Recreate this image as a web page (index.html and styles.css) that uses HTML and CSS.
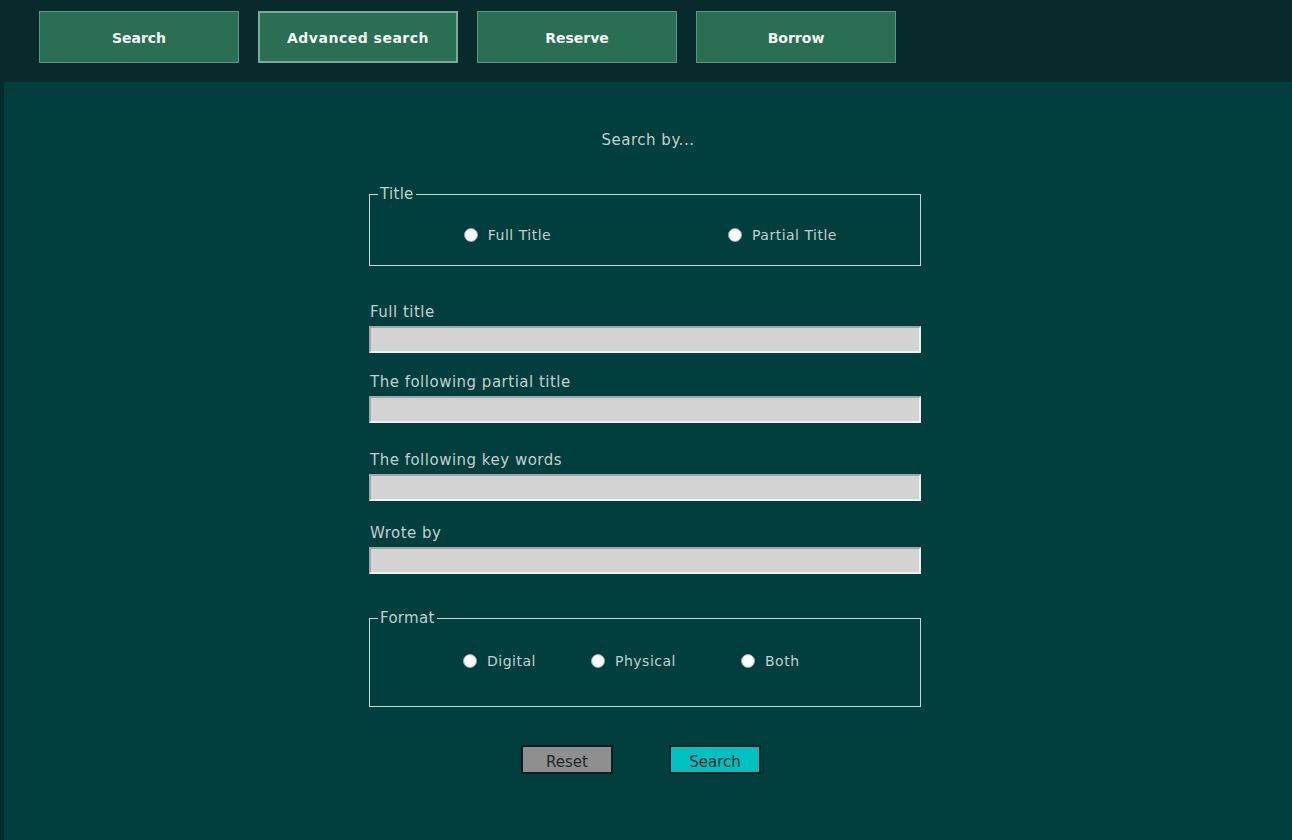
FILE: index.html
```html
<!DOCTYPE html>
<html lang="en">
<head>
<meta charset="utf-8">
<title>Advanced search</title>
<link rel="stylesheet" href="styles.css">
</head>
<body>
<header class="topbar">
  <nav class="nav">
    <a class="nav-btn" href="#">Search</a>
    <a class="nav-btn nav-btn--active" href="#">Advanced search</a>
    <a class="nav-btn" href="#">Reserve</a>
    <a class="nav-btn" href="#">Borrow</a>
  </nav>
</header>
<main class="main">
  <p class="intro">Search by...</p>
  <form class="form">
    <fieldset class="group group--title">
      <legend class="legend">Title</legend>
      <div class="choices choices--two">
        <label class="choice"><input type="radio" name="title" class="radio"> Full Title</label>
        <label class="choice"><input type="radio" name="title" class="radio"> Partial Title</label>
      </div>
    </fieldset>

    <label class="field field--full">
      <span class="field-label">Full title</span>
      <input type="text" class="input">
    </label>
    <label class="field field--partial">
      <span class="field-label">The following partial title</span>
      <input type="text" class="input">
    </label>
    <label class="field field--keys">
      <span class="field-label">The following key words</span>
      <input type="text" class="input">
    </label>
    <label class="field field--author">
      <span class="field-label">Wrote by</span>
      <input type="text" class="input">
    </label>

    <fieldset class="group group--format">
      <legend class="legend">Format</legend>
      <div class="choices choices--three">
        <label class="choice"><input type="radio" name="format" class="radio"> Digital</label>
        <label class="choice"><input type="radio" name="format" class="radio"> Physical</label>
        <label class="choice"><input type="radio" name="format" class="radio"> Both</label>
      </div>
    </fieldset>

    <div class="actions">
      <button type="reset" class="btn btn--reset">Reset</button>
      <button type="submit" class="btn btn--search">Search</button>
    </div>
  </form>
</main>
</body>
</html>
```
FILE: styles.css
```css
* { box-sizing: border-box; }

html, body {
  margin: 0;
  height: 100%;
}

body {
  background: #072b2c;
  font-family: "DejaVu Sans", "Open Sans", sans-serif;
  color: #c3cfcf;
  display: flex;
  flex-direction: column;
}

.topbar {
  height: 82px;
  background: #092a2c;
  padding: 11px 0 0 39px;
}

.nav {
  display: flex;
  gap: 19px;
}

.nav-btn {
  width: 200px;
  height: 52px;
  display: flex;
  align-items: center;
  justify-content: center;
  padding-top: 2px;
  background: #2a6e53;
  border: 1px solid #5c987f;
  color: #f4f8f6;
  font-weight: 700;
  font-size: 14px;
  text-decoration: none;
}

.nav-btn--active {
  border: 2px solid #7aab98;
  letter-spacing: 0.5px;
}

.main {
  flex: 1;
  margin-left: 4px;
  background: #013e3e;
  padding-top: 49px;
  padding-bottom: 40px;
}

.intro {
  margin: 0;
  text-align: center;
  font-size: 15px;
  letter-spacing: 0.5px;
  line-height: 18px;
}

.form {
  width: 558px;
  margin: 37px auto 0;
}

.group {
  width: 552px;
  margin: 0;
  border: 1px solid #c9d4d4;
  padding: 0 8px;
}

.legend {
  padding: 0 2px;
  font-size: 15px;
  letter-spacing: 0.3px;
  line-height: 16px;
}

.group--title {
  height: 80px;
  padding-top: 24px;
}

.choices {
  display: grid;
  align-items: center;
}

.choices--two {
  grid-template-columns: 1fr 1fr;
  margin: 0 -8px;
  justify-items: center;
}

.choices--three {
  grid-template-columns: 128px 150px auto;
  padding-left: 85px;
}

.group--format {
  height: 97px;
  margin-top: 36px;
  padding-top: 26px;
}

.choice {
  display: flex;
  align-items: center;
  gap: 10px;
  font-size: 14px;
  letter-spacing: 0.5px;
  line-height: 18px;
}

.radio {
  appearance: none;
  -webkit-appearance: none;
  margin: 0;
  width: 14px;
  height: 14px;
  border-radius: 50%;
  background: #ffffff;
  border: 1px solid #9aa5a5;
}

.field {
  display: block;
  width: 552px;
}

.field-label {
  display: block;
  font-size: 15px;
  letter-spacing: 0.5px;
  line-height: 18px;
  margin-bottom: 5px;
  padding-left: 1px;
}

.field--full { margin-top: 37px; }
.field--partial { margin-top: 20px; }
.field--keys { margin-top: 28px; }
.field--author { margin-top: 23px; }

.input {
  display: block;
  width: 552px;
  height: 27px;
  margin: 0;
  background: #d3d3d3;
  border: 2px solid #f0f0f0;
  border-top-color: #9ea8a8;
  border-left-color: #9ea8a8;
}

.actions {
  display: flex;
  justify-content: center;
  gap: 56px;
  margin: 38px 0 0;
  padding-right: 14px;
}

.btn {
  height: 29px;
  width: 92px;
  font-family: "DejaVu Sans", "Open Sans", sans-serif;
  font-size: 15px;
  color: #1b2a2a;
  border: 2px solid #111c1c;
  padding: 4px 0 0;
}

.btn--reset { background: #8f8f8f; }
.btn--search { background: #00c0c0; }
```
